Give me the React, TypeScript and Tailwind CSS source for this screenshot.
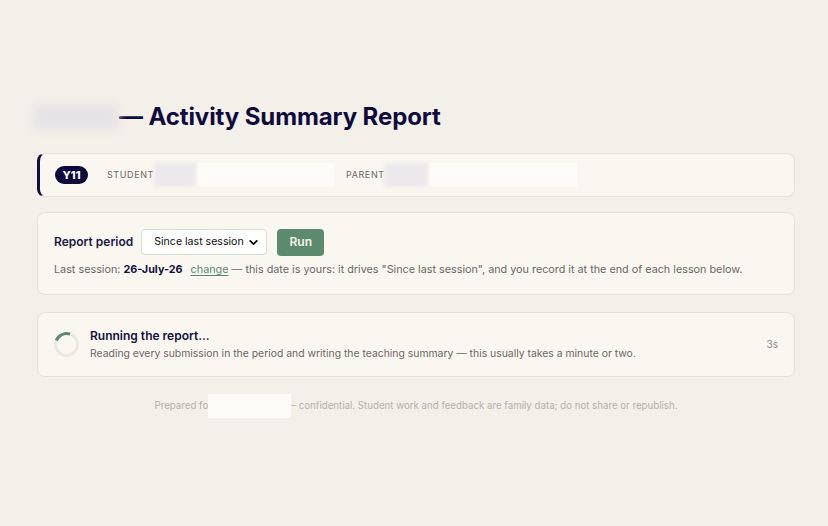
import { ChevronDown } from 'lucide-react';

const Redacted = ({ w }: { w: string }) => (
  <span className={`inline-block align-middle h-[24px] ${w} bg-[#fdfcf9]`} />
);

const App = () => {
  return (
    <div className="min-h-[526px] bg-[#f3f0e9] font-['Inter',sans-serif] text-[#16123f]">
      <div className="ml-[37px] w-[758px] pt-[101px]">
        {/* Title */}
        <h1 className="flex items-center text-[24px] leading-[32px] font-bold tracking-[-0.1px] text-[#0f0b3d] -ml-[3px] mb-[20px]">
          <span className="inline-block w-[84px] h-[26px] bg-[#e6e3e6] blur-[4px] mr-[1px]" />
          — Activity Summary Report
        </h1>

        {/* Student strip */}
        <div className="flex items-center h-[44px] rounded-[8px] border border-[#e7e2d8] border-l-[3px] border-l-[#120d45] bg-[#faf7f1] pl-[15px]">
          <span className="flex items-center justify-center h-[18px] w-[33px] rounded-full bg-[#0e0a3e] text-white text-[11px] font-extrabold">
            Y11
          </span>
          <span className="ml-[19px] text-[9px] tracking-[0.6px] text-[#6a665f]">STUDENT</span>
          <span className="flex items-center">
            <span className="inline-block h-[24px] w-[42px] bg-[#ece9ec] blur-[2px]" />
            <Redacted w="w-[138px]" />
          </span>
          <span className="ml-[12px] text-[9px] tracking-[0.6px] text-[#6a665f]">PARENT</span>
          <span className="flex items-center">
            <span className="inline-block h-[24px] w-[43px] bg-[#ece9ec] blur-[2px]" />
            <Redacted w="w-[149px]" />
          </span>
        </div>

        {/* Report period */}
        <div className="mt-[15px] rounded-[8px] border border-[#e7e2d8] bg-[#faf7f1] px-4 pt-[16px] pb-[15px]">
          <div className="flex items-center h-[26px]">
            <span className="text-[12px] font-semibold text-[#1b1846]">Report period</span>
            <div className="ml-[8px] flex items-center justify-between h-[26px] w-[126px] rounded-[4px] border border-[#cfe0d2] bg-white pl-[12px] pr-[6px]">
              <span className="text-[10.6px] whitespace-nowrap text-[#111]">Since last session</span>
              <ChevronDown className="h-[13px] w-[13px] shrink-0 text-black" strokeWidth={3.2} />
            </div>
            <button className="ml-[10px] h-[27px] w-[47px] rounded-[4px] bg-[#5b8a6f] text-[12px] font-semibold text-[#f4f6ea]">
              Run
            </button>
          </div>
          <p className="mt-[6px] text-[10.8px] leading-[18px] whitespace-nowrap text-[#6b675f]">
            Last session: <b className="font-bold text-[#16123f]">26-July-26</b>
            <span className="ml-[8px] underline underline-offset-2 text-[#5b8a6f]">change</span> — this date is yours: it
            drives "Since last session", and you record it at the end of each lesson below.
          </p>
        </div>

        {/* Running */}
        <div className="mt-[17px] flex items-center h-[65px] rounded-[8px] border border-[#e7e2d8] bg-[#faf7f1] px-4">
          <div className="h-[25px] w-[25px] shrink-0 rounded-full border-[3px] border-[#ebe8e1] border-t-[#5b8c6f] -rotate-[25deg]" />
          <div className="ml-[11px] flex-1">
            <div className="text-[12px] leading-[16px] font-semibold text-[#14113d]">Running the report...</div>
            <div className="mt-[1px] text-[10.4px] leading-[17px] text-[#6b675f]">
              Reading every submission in the period and writing the teaching summary — this usually takes a minute or two.
            </div>
          </div>
          <span className="text-[10px] text-[#8a867e]">3s</span>
        </div>

        {/* Footer */}
        <p className="mt-[17px] flex items-center justify-center text-[9.7px] text-[#b6b1a8]">
          Prepared fo
          <span className="inline-block h-[24px] w-[83px] bg-[#fdfcf9]" />
          – confidential. Student work and feedback are family data; do not share or republish.
        </p>
      </div>
    </div>
  );
};

export default App;
